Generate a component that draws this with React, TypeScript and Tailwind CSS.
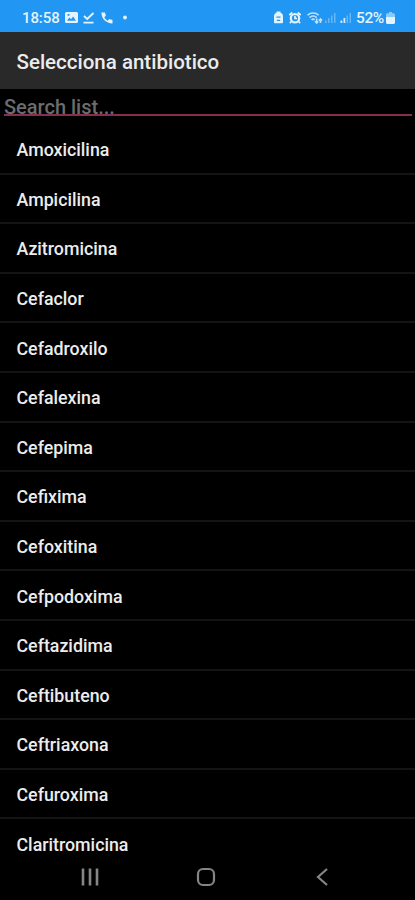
import { useMemo, useState } from "react";

const ANTIBIOTICS = [
  "Amoxicilina",
  "Ampicilina",
  "Azitromicina",
  "Cefaclor",
  "Cefadroxilo",
  "Cefalexina",
  "Cefepima",
  "Cefixima",
  "Cefoxitina",
  "Cefpodoxima",
  "Ceftazidima",
  "Ceftibuteno",
  "Ceftriaxona",
  "Cefuroxima",
  "Claritromicina",
];

function StatusBar() {
  return (
    <div className="flex h-8 shrink-0 items-center justify-between bg-[#2196f3] pt-[3px] pr-[20px] pl-[22px] text-[#e3f4ff]">
      <div className="flex items-center">
        <span className="w-[38px] text-[15px] leading-4 font-medium tracking-[-0.1px]">18:58</span>
        {/* Image, download done, call, more */}
        <svg width="66" height="16" viewBox="0 0 66 16" className="ml-[4px]" fill="none">
          <path
            fill="currentColor"
            fillRule="evenodd"
            d="M2.5 2h10A1.5 1.5 0 0 1 14 3.500v8a1.500 1.500 0 0 1-1.500 1.500h-10A1.500 1.500 0 0 1 1 11.500v-8A1.500 1.500 0 0 1 2.500 2Zm.5 8.700h9L9.200 6.400 7 9.200 5.300 7.500 3 10.700ZM3.600 4v1.700h1.900V4H3.600Z"
          />
          <path d="M20 6 23.200 9 29.500 3M19.500 12.600h10" stroke="currentColor" strokeWidth="1.900" />
          <path
            d="M37.400 2.500c0 6.200 4.600 10.800 11.100 11V9.900l-3.300-.9-1.600 1.700c-1.500-.7-2.600-1.900-3.300-3.400L41.900 5.700 41 2.500h-3.600Z"
            fill="currentColor"
          />
          <circle cx="61" cy="7.500" r="1.900" fill="currentColor" />
        </svg>
      </div>
      <div className="flex items-center">
        {/* Battery saver, alarm, wifi, two signal meters */}
        <svg width="82" height="16" viewBox="0 0 82 16" fill="none">
          <path
            fill="currentColor"
            fillRule="evenodd"
            d="M3.500 1.500h4v1.300c1.700.4 2.500 1.800 2.500 3.600v5.600c0 .8-.5 1.300-1.300 1.300H2.300C1.500 13.300 1 12.800 1 12V6.400c0-1.800.8-3.200 2.500-3.600V1.500Zm0 5v1.300h4V6.500h-4Zm.3 3.300v1.200h3.400V9.800H3.800Z"
          />
          <circle cx="22" cy="8.200" r="4.200" stroke="currentColor" strokeWidth="2.200" />
          <path d="m16.300 5 3-2.500M27.700 5l-3-2.500M18.300 11.500l-1.400 1.600M25.700 11.500l1.400 1.600M22 5.800V8.500h2" stroke="currentColor" strokeWidth="1.700" />
          <g stroke="currentColor" strokeWidth="1.600" opacity=".8">
            <path d="M34.500 5.200c3.100-3 8.100-3 11.200 0M36.500 7.600c2-1.900 5.200-1.900 7.200 0M38.500 9.900c.9-.9 2.300-.9 3.200 0" />
            <path d="M43.700 8.500v4.500M42 11.200l1.700 1.800 1.500-1.800M47.500 13V9M45.800 10.600l1.700-1.600 1.500 1.600" />
          </g>
          <g fill="currentColor">
            <g opacity=".35">
              <path d="M52 10.500h1.500V13H52zM55 8h1.500v5H55zM58 5.500h1.500V13H58zM61 3h1.500v10H61z" />
              <path d="M73.500 5.500H75V13h-1.500zM76.500 3H78v10h-1.500z" />
            </g>
            <path d="M67.500 10.500h1.800V13h-1.800zM70.500 8h1.800v5h-1.800z" opacity=".9" />
          </g>
        </svg>
        <span className="ml-[1px] w-[30px] text-[15.500px] leading-4 font-medium tracking-[-0.4px]">52%</span>
        <svg width="9" height="14" viewBox="0 0 9 14" fill="currentColor">
          <path d="M3 1h3v1.300h1.500C8.300 2.300 9 3 9 3.800V7H0V3.800C0 3 .7 2.300 1.500 2.300H3V1Z" opacity=".55" />
          <path d="M0 6h9v5.500c0 .8-.7 1.500-1.500 1.500h-6C.7 13 0 12.300 0 11.500V6Z" />
        </svg>
      </div>
    </div>
  );
}

function NavBar() {
  return (
    <div className="flex h-[46px] shrink-0 items-center justify-between bg-black pr-[83px] pl-[80px] text-[#858585]">
      <button type="button" aria-label="Recientes">
        <svg width="20" height="20" viewBox="0 0 20 20" stroke="currentColor" strokeWidth="2.600">
          <path d="M3 1.500v17M10 1.500v17M17 1.500v17" />
        </svg>
      </button>
      <button type="button" aria-label="Inicio">
        <svg width="20" height="20" viewBox="0 0 20 20" fill="none" stroke="currentColor" strokeWidth="2.200">
          <rect x="2" y="2" width="16" height="16" rx="5" />
        </svg>
      </button>
      <button type="button" aria-label="Atrás">
        <svg width="20" height="20" viewBox="0 0 20 20" fill="none" stroke="currentColor" strokeWidth="2.200">
          <path d="M15 2 6 10l9 8" />
        </svg>
      </button>
    </div>
  );
}

export default function App() {
  const [query, setQuery] = useState("");

  const items = useMemo(
    () => ANTIBIOTICS.filter((name) => name.toLowerCase().includes(query.trim().toLowerCase())),
    [query],
  );

  return (
    <div className="flex h-[900px] w-[415px] flex-col overflow-hidden bg-black font-['Roboto',sans-serif] text-[#ececec]">
      <StatusBar />

      <header className="flex h-[57px] shrink-0 items-center bg-[#292929] pt-[2px] pl-[16.500px]">
        <h1 className="text-[20.500px] leading-6 font-medium">Selecciona antibiotico</h1>
      </header>

      <div className="h-[36px] shrink-0 px-1 pt-[7px]">
        <input
          value={query}
          onChange={(e) => setQuery(e.target.value)}
          placeholder="Search list..."
          className="block h-5 w-[408px] border-b-2 border-[#85304f] bg-transparent pt-[3px] text-[20px] leading-5 font-medium outline-none placeholder:text-[#6c6c6c]"
        />
      </div>

      <ul className="min-h-0 flex-1 overflow-hidden">
        {items.map((name) => (
          <li
            key={name}
            className="flex h-[49.600px] items-center border-b-2 border-[#141414] pt-[3px] pl-[16.500px] text-[17.800px] leading-6 font-medium"
          >
            {name}
          </li>
        ))}
      </ul>

      <NavBar />
    </div>
  );
}
